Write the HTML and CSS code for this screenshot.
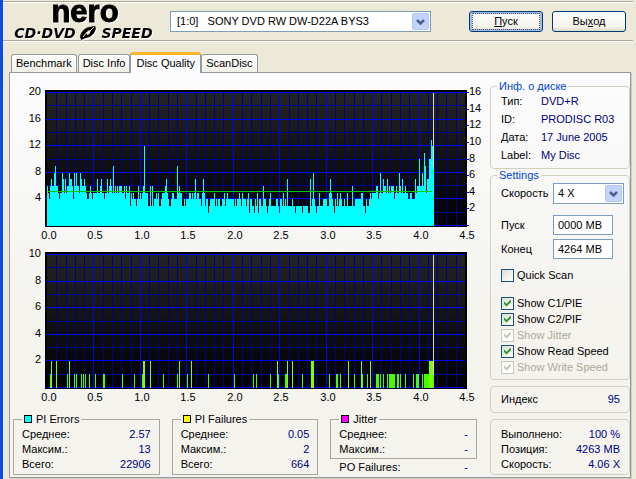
FILE: index.html
```html
<!DOCTYPE html>
<html lang="ru">
<head>
    <meta charset="UTF-8">
    <meta name="viewport" content="width=device-width, initial-scale=1.0">
    <title>Nero CD-DVD Speed</title>
    <link rel="stylesheet" href="styles.css">
</head>
<body>

<header class="toolbar">
    <svg class="logo" viewBox="0 0 148 38" role="img" aria-label="nero CD-DVD Speed">
        <text class="logo-nero" x="73" y="20">nero</text>
        <text class="logo-sub" x="33" y="36">CD·DVD</text>
        <text class="logo-sub" x="115" y="36">SPEED</text>
        <path d="M69 37C66 34 71 26 77 25L83 24C86 27 80 36 74 36L69 38Z" fill="#000"/>
        <path d="M71 35L75 30M78 29L82 25" stroke="#ece9d8" stroke-width="1"/>
        <ellipse cx="76.5" cy="30.5" rx="1.5" ry="2.5" transform="rotate(40 76.5 30.5)" fill="#ece9d8"/>
    </svg>
    <select class="drive" aria-label="Drive">
        <option>[1:0]&nbsp;&nbsp; SONY DVD RW DW-D22A BYS3</option>
    </select>
    <div class="actions">
        <button class="btn btn-default" type="button"><span><u>П</u>уск</span></button>
        <button class="btn" type="button"><span>Вы<u>х</u>од</span></button>
    </div>
</header>

<main class="content">
    <nav class="tabs" role="tablist">
        <button class="tab" role="tab" type="button">Benchmark</button>
        <button class="tab" role="tab" type="button">Disc Info</button>
        <button class="tab active" role="tab" type="button" aria-selected="true">Disc Quality</button>
        <button class="tab" role="tab" type="button">ScanDisc</button>
    </nav>

    <div class="panel">
        <section class="graphs">
            <svg class="chart" id="pieChart" viewBox="0 0 478 162" role="img" aria-label="PI Errors"></svg>
            <svg class="chart" id="pifChart" viewBox="0 0 478 162" role="img" aria-label="PI Failures"></svg>

            <div class="stats">
                <fieldset class="stat">
                    <legend><i class="swatch cyan"></i>PI Errors</legend>
                    <dl>
                        <div><dt>Среднее:</dt><dd>2.57</dd></div>
                        <div><dt>Максим.:</dt><dd>13</dd></div>
                        <div><dt>Всего:</dt><dd>22906</dd></div>
                    </dl>
                </fieldset>
                <fieldset class="stat">
                    <legend><i class="swatch yellow"></i>PI Failures</legend>
                    <dl>
                        <div><dt>Среднее:</dt><dd>0.05</dd></div>
                        <div><dt>Максим.:</dt><dd>2</dd></div>
                        <div><dt>Всего:</dt><dd>664</dd></div>
                    </dl>
                </fieldset>
                <div>
                    <fieldset class="stat">
                        <legend><i class="swatch magenta"></i>Jitter</legend>
                        <dl>
                            <div><dt>Среднее:</dt><dd>-</dd></div>
                            <div><dt>Максим.:</dt><dd>-</dd></div>
                        </dl>
                    </fieldset>
                    <dl class="po">
                        <div><dt>PO Failures:</dt><dd>-</dd></div>
                    </dl>
                </div>
            </div>
        </section>

        <aside class="side">
            <fieldset class="group info">
                <legend>Инф. о диске</legend>
                <dl>
                    <dt>Тип:</dt><dd>DVD+R</dd>
                    <dt>ID:</dt><dd>PRODISC R03</dd>
                    <dt>Дата:</dt><dd>17 June 2005</dd>
                    <dt>Label:</dt><dd>My Disc</dd>
                </dl>
            </fieldset>

            <fieldset class="group settings">
                <legend>Settings</legend>
                <div class="fields">
                    <label for="speed">Скорость</label>
                    <select id="speed"><option>4 X</option></select>
                    <label class="spaced" for="start">Пуск</label>
                    <input class="spaced" type="text" id="start" value="0000 MB">
                    <label for="end">Конец</label>
                    <input type="text" id="end" value="4264 MB">
                </div>
                <div class="checks">
                    <label class="quick"><input type="checkbox">Quick Scan</label>
                    <label><input type="checkbox" checked>Show C1/PIE</label>
                    <label><input type="checkbox" checked>Show C2/PIF</label>
                    <label class="off"><input type="checkbox" checked disabled>Show Jitter</label>
                    <label><input type="checkbox" checked>Show Read Speed</label>
                    <label class="off"><input type="checkbox" checked disabled>Show Write Speed</label>
                </div>
            </fieldset>

            <dl class="group summary">
                <div><dt>Индекс</dt><dd>95</dd></div>
            </dl>

            <dl class="group summary progress">
                <div><dt>Выполнено:</dt><dd>100 %</dd></div>
                <div><dt>Позиция:</dt><dd>4263 MB</dd></div>
                <div><dt>Скорость:</dt><dd>4.06 X</dd></div>
            </dl>
        </aside>
    </div>
</main>

<script src="script.js"></script>
</body>
</html>
```
FILE: styles.css
```css
* {
    box-sizing: border-box;
}
body {
    margin: 0;
    min-height: 100vh;
    border-left: 3px solid #0a4be0;
    background-color: #ece9d8;
    color: #000;
    font-family: "Liberation Sans", Arial, sans-serif;
    font-size: 11px;
    line-height: 15px;
}
button, input, select {
    font: inherit;
    color: inherit;
}
dl, dd {
    margin: 0;
}
dd {
    color: #000080;
}
fieldset {
    margin: 0;
    min-width: 0;
}

/* Top bar */
.toolbar {
    display: flex;
    align-items: center;
    margin: 1px 3px 0 0;
    height: 40px;
    border-top: 1px solid #aca899;
    border-bottom: 1px solid #aca899;
    box-shadow: 0 1px #fff, inset 0 1px #fff;
    padding: 0 7px 0 9px;
}
.logo {
    width: 148px;
    height: 38px;
    flex: none;
    overflow: visible;
    filter: drop-shadow(1px 1px 0 #fff);
}
.logo text {
    text-anchor: middle;
}
.logo-nero {
    font: bold 31px "Liberation Sans", Arial, sans-serif;
    stroke: #000;
    stroke-width: 1px;
}
.logo-sub {
    font: italic bold 14px "DejaVu Sans", sans-serif;
}
select {
    appearance: none;
    border: 1px solid #7f9db9;
    border-radius: 0;
    padding: 0 20px 0 6px;
    background: #fff url("data:image/svg+xml,%3Csvg xmlns='http://www.w3.org/2000/svg' width='17' height='17'%3E%3Crect x='.5' y='.5' width='16' height='16' rx='1' fill='%23c3d3fd' stroke='%23b4c8f6'/%3E%3Cpath d='M5 7l3.500 3.500L12 7' fill='none' stroke='%234d6185' stroke-width='2.500'/%3E%3C/svg%3E") no-repeat right 1px center;
}
.drive {
    flex: 1;
    height: 21px;
    margin: 0 38px 0 10px;
}
.actions {
    display: flex;
    gap: 9px;
}
.btn {
    width: 74px;
    height: 21px;
    padding: 1px;
    border: 1px solid #003c74;
    border-radius: 3px;
    background: linear-gradient(#fff, #f3f2ea 80%, #dcd7c8);
}
.btn span {
    display: block;
}
.btn-default {
    box-shadow: inset 0 0 0 2px #9db9ee;
}
.btn-default span {
    border: 1px dotted #555;
    margin: 0 1px;
}

/* Tabs */
.content {
    padding: 11px 4px 1px 6px;
}
.tabs {
    display: flex;
    align-items: flex-end;
    padding-left: 2px;
    height: 20px;
}
.tab {
    height: 18px;
    padding: 0 4px;
    margin-right: 1px;
    border: 1px solid #919b9c;
    border-bottom: 0;
    border-radius: 3px 3px 0 0;
    background: linear-gradient(#fff, #f1f0e8);
    white-space: nowrap;
}
.tab.active {
    height: 21px;
    margin: 0 0 -1px -1px;
    padding: 0 5px 2px;
    border-top: 3px solid #ffb52b;
    background: #fcfcfe;
    z-index: 1;
}

/* Page body */
.panel {
    display: grid;
    grid-template-columns: 1fr 140px;
    column-gap: 2px;
    padding-top: 7px;
    margin-right: 1px;
    border: 1px solid #919b9c;
    background: linear-gradient(#fcfcfe, #f4f3ee 60%);
    box-shadow: 1px 1px #d0cebf;
}
.chart {
    display: block;
    width: 100%;
    shape-rendering: crispEdges;
}
.chart text {
    font-size: 11px;
}
.minor {
    stroke: #000090;
}
.major {
    stroke: #0000ff;
}
.speed-line {
    stroke: #00c800;
}
.position {
    stroke: #d8d8d8;
}

/* Statistics under the charts */
.stats {
    display: grid;
    grid-template-columns: repeat(3, 1fr);
    gap: 12px;
    padding: 9px 11px 2px 3px;
}
.stat {
    padding: 2px 8px 1px;
    border: 1px solid #aca899;
}
.stat legend {
    display: flex;
    align-items: center;
    gap: 4px;
    height: 12px;
    padding: 0 2px;
}
.stat dl div, .po div, .summary div {
    display: flex;
    justify-content: space-between;
}
.po {
    padding: 1px 9px 0;
}
.swatch {
    width: 8px;
    height: 8px;
    border: 1px solid #000;
}
.cyan {
    background: #00ffff;
}
.yellow {
    background: #ffff00;
}
.magenta {
    background: #ff00ff;
}

/* Right column */
.side {
    display: flex;
    flex-direction: column;
}
.group {
    border: 1px solid #d0d0bf;
    border-radius: 4px;
    padding: 0 5px 0 10px;
}
.group legend {
    height: 12px;
    line-height: 12px;
    margin-left: -4px;
    padding: 0 2px;
    color: #0046d5;
}
.info dl {
    display: grid;
    grid-template-columns: 40px 1fr;
    line-height: 18px;
    padding-bottom: 4px;
    white-space: nowrap;
}
.fields {
    display: grid;
    grid-template-columns: 52px 1fr;
    align-items: center;
    row-gap: 4px;
    padding-top: 2px;
}
.fields input {
    width: 60px;
    height: 20px;
    padding: 0 4px;
    border: 1px solid #7f9db9;
    background: #fff;
}
.fields select {
    height: 21px;
    padding-left: 4px;
}
.fields .spaced {
    margin-top: 7px;
}
.checks {
    padding: 8px 0 4px;
}
.checks label {
    display: flex;
    align-items: center;
    gap: 3px;
    height: 16px;
    white-space: nowrap;
}
.checks .quick {
    margin-bottom: 12px;
}
.checks .off {
    color: #aca899;
}
.checks input {
    appearance: none;
    width: 13px;
    height: 13px;
    margin: 0;
    border: 1px solid #1c5180;
    background: linear-gradient(135deg, #dcdcd7, #fff);
}
.checks input:checked::before {
    content: "";
    display: block;
    width: 7px;
    height: 7px;
    margin: 2px;
    background: #21a121;
    clip-path: polygon(0 29%, 36% 60%, 100% 0, 100% 36%, 36% 100%, 0 66%);
}
.checks input:disabled {
    border-color: #cac8bb;
    background: #fff;
}
.checks input:disabled::before {
    background: #c4c2b4;
}
.summary {
    margin-top: 6px;
    padding: 5px 9px 5px 10px;
}
.progress {
    padding: 7px 9px 2px 10px;
}
```
FILE: script.js
```js
// One character per column, value in hex, 20 columns in each row
const PIE = [
    '65467668966545587575', '66877648686658766765', '44565455557556755455', '75676595656566655646',
    '55635454434645456c55', '53363634454533455567', '54334554449565533434', '44554545745544357534',
    '42344445343443344534', '54444443434454354443', '45244332435244336443', '23453333344324435343',
    '73333433233333323333', '32273484323353334444', '33575432435345433433', '53333633444444553324',
    '33454555566458557665', '75656664565586575565', '544554447566a6686b95', '77aadc9'
].join('');

// Columns of PI failures: [first, last, value]
const PIF = [
    [3, 3, 1], [4, 4, 2], [9, 9, 2], [20, 20, 1], [22, 22, 2], [27, 27, 1], [29, 29, 1],
    [34, 34, 1], [36, 36, 1], [38, 38, 1], [42, 42, 1], [48, 48, 1], [56, 57, 1], [75, 75, 1],
    [87, 87, 1], [95, 95, 1], [96, 97, 2], [103, 103, 2], [116, 116, 1], [130, 130, 1],
    [132, 132, 2], [140, 140, 1], [144, 144, 2], [161, 161, 1], [187, 187, 1], [206, 206, 1],
    [209, 209, 1], [223, 223, 1], [230, 230, 2], [231, 231, 1], [238, 239, 1], [240, 240, 2],
    [245, 245, 2], [255, 255, 1], [264, 266, 2], [282, 282, 1], [289, 290, 1], [293, 293, 1],
    [301, 301, 2], [307, 307, 1], [314, 314, 2], [315, 315, 1], [320, 320, 1], [323, 323, 2],
    [329, 331, 1], [333, 333, 1], [336, 336, 1], [340, 340, 1], [342, 347, 1], [350, 351, 1],
    [353, 353, 1], [358, 358, 1], [366, 366, 1], [369, 371, 1], [375, 375, 1], [377, 381, 1],
    [382, 385, 2], [386, 386, 1]
];

const X0 = 37;
const TOP = 12;
const BASE = 146;
const WIDTH = 418;
const HEIGHT = 133;

function line(cls, x1, y1, x2, y2) {
    return `<line class="${cls}" x1="${x1 + 0.5}" y1="${y1 + 0.5}" x2="${x2 + 0.5}" y2="${y2 + 0.5}"/>`;
}

function frame(id, max, step) {
    let s = `<defs><linearGradient id="${id}Bg" x1="0" y1="0" x2="0" y2="1">
        <stop offset="0" stop-color="#242424"/><stop offset="1" stop-color="#000"/></linearGradient></defs>
        <rect x="35" y="10" width="422" height="137" fill="#000"/>
        <rect x="37" y="12" width="418" height="134" fill="url(#${id}Bg)"/>`;
    // vertical lines every 0.1 GB, then the horizontal ones
    for (let i = 1; i < 45; i++) {
        if (i % 5) s += line('minor', X0 + Math.round(i * WIDTH / 45), TOP, X0 + Math.round(i * WIDTH / 45), BASE);
    }
    for (let i = 1; i < 10; i += 2) {
        const y = TOP + Math.round(i * HEIGHT / 10);
        s += line('minor', 35, y, X0 + WIDTH, y);
    }
    for (let i = 0; i <= 9; i++) {
        const x = X0 + Math.round(i * WIDTH / 9);
        if (i > 0 && i < 9) s += line('major', x, TOP, x, BASE);
        s += `<text x="${x + 2}" y="159" text-anchor="middle">${(i / 2).toFixed(1)}</text>`;
    }
    for (let i = 0; i <= 5; i++) {
        const y = TOP + Math.round(i * HEIGHT / 5);
        s += line('major', 34, y, X0 + WIDTH - 1, y);
        if (i < 5) s += `<text x="31" y="${y + 3}" text-anchor="end">${max - i * step}</text>`;
    }
    return s;
}

function bar(x, w, h, color) {
    return `<rect x="${X0 + x}" y="${BASE - h}" width="${w}" height="${h}" fill="${color}"/>`;
}

// PI errors with the read speed on the right axis
let pie = frame('pie', 20, 4);
[...PIE].forEach((c, i) => {
    pie += bar(i, 1, Math.round(parseInt(c, 16) * HEIGHT / 20), '#00ffff');
});
pie += line('speed-line', X0, 111, 421, 111);
pie += line('position', 423, TOP, 423, 86);
for (let v = 0; v <= 16; v++) {
    const y = TOP + Math.round((16 - v) * HEIGHT / 16);
    pie += line('major', 455, y, v % 2 ? 456 : 458, y);
    if (v && v % 2 === 0) pie += `<text x="459" y="${y + 3}">${v}</text>`;
}
document.getElementById('pieChart').innerHTML = pie;

let pif = frame('pif', 10, 2);
PIF.forEach(([a, b, v]) => {
    pif += bar(a, b - a + 1, v === 2 ? 27 : 14, v === 2 ? '#80ff00' : '#40ff00');
});
pif += line('position', 423, TOP, 423, 131);
document.getElementById('pifChart').innerHTML = pif;
```
